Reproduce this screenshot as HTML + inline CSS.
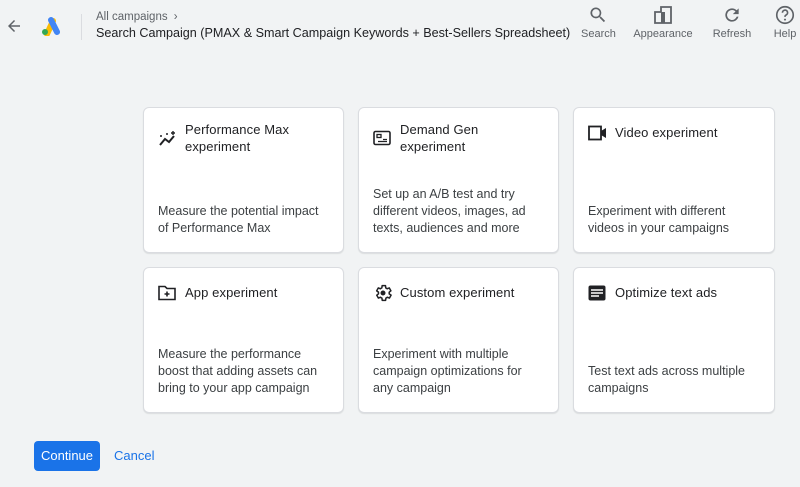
<!DOCTYPE html>
<html><head><meta charset="utf-8"><style>
*{margin:0;padding:0;box-sizing:border-box}
body{width:800px;height:487px;background:#f1f3f4;font-family:"Liberation Sans",Arial,sans-serif;position:relative;overflow:hidden;color:#202124}
.a{position:absolute}
.card{position:absolute;background:#fff;border:1px solid #dadce0;border-radius:6px;box-shadow:0 1px 1px rgba(60,64,67,.12)}
.t{position:absolute;left:41px;top:13px;font-size:13px;line-height:17px;color:#202124;letter-spacing:.1px}
.ic{position:absolute;left:14px;top:20px}
.d{position:absolute;left:14px;bottom:15px;font-size:12.5px;line-height:17px;color:#3c4043;width:168px}
.tb{position:absolute;top:28px;font-size:11px;color:#5f6368;text-align:center}
</style></head><body>
<svg class="a" style="left:5px;top:17px" width="18" height="18" viewBox="0 0 24 24"><path d="M20 11H7.8l5.6-5.6L12 4l-8 8 8 8 1.4-1.4L7.8 13H20z" fill="#5f6368"/></svg>
<svg class="a" style="left:40px;top:16px" width="22" height="20" viewBox="0 0 22 20"><path d="M7 18 L13 5" stroke="#fbbc04" stroke-width="6" stroke-linecap="round"/><path d="M11 4 L17 16" stroke="#4285f4" stroke-width="6" stroke-linecap="round"/><circle cx="5" cy="16" r="3" fill="#34a853"/></svg>
<div class="a" style="left:81px;top:14px;width:1px;height:26px;background:#dadce0"></div>
<div class="a" style="left:96px;top:11px;font-size:11.5px;color:#5f6368">All campaigns <span style="margin-left:3px">›</span></div>
<div class="a" style="left:96px;top:26px;font-size:12.6px;color:#202124;white-space:nowrap">Search Campaign (PMAX &amp; Smart Campaign Keywords + Best-Sellers Spreadsheet)</div>
<svg class="a" style="left:588px;top:5px" width="20" height="20" viewBox="0 0 24 24"><path d="M15.5 14h-.8l-.3-.3A6.5 6.5 0 1 0 9.5 16a6.5 6.5 0 0 0 4.2-1.6l.3.3v.8l5 5 1.5-1.5-5-5zm-6 0A4.5 4.5 0 1 1 14 9.5 4.5 4.5 0 0 1 9.5 14z" fill="#5f6368"/></svg>
<div class="tb" style="left:581px;width:34px">Search</div>
<svg class="a" style="left:653px;top:5px" width="20" height="20" viewBox="0 0 20 20"><path d="M8 2h10v16H2V7h6z" fill="none" stroke="#5f6368" stroke-width="1.8"/><rect x="8" y="7" width="4" height="11" fill="#5f6368"/></svg>
<div class="tb" style="left:633px;width:60px">Appearance</div>
<svg class="a" style="left:722px;top:5px" width="20" height="20" viewBox="0 0 24 24"><path d="M17.65 6.35A7.95 7.95 0 0 0 12 4a8 8 0 1 0 7.73 10h-2.08A6 6 0 1 1 12 6c1.66 0 3.14.69 4.22 1.78L13 11h7V4z" fill="#5f6368"/></svg>
<div class="tb" style="left:711px;width:42px">Refresh</div>
<svg class="a" style="left:774px;top:4px" width="22" height="22" viewBox="0 0 24 24"><circle cx="12" cy="12" r="9" fill="none" stroke="#5f6368" stroke-width="1.8"/><path d="M9.2 9.5a2.8 2.8 0 1 1 4 2.5c-.8.4-1.2 1-1.2 2" fill="none" stroke="#5f6368" stroke-width="1.8"/><circle cx="12" cy="17" r="1.1" fill="#5f6368"/></svg>
<div class="tb" style="left:772px;width:26px">Help</div>

<div class="card" style="left:143px;top:107px;width:201px;height:146px">
<svg class="ic" style="top:22px" width="20" height="18" viewBox="0 0 20 18"><path d="M2 15l5-6 4 3 5-6" fill="none" stroke="#202124" stroke-width="2"/><path d="M15 1v4M13 3h4" stroke="#202124" stroke-width="1.4"/><circle cx="3" cy="6" r="1" fill="#202124"/><circle cx="9" cy="4" r="1" fill="#202124"/></svg>
<div class="t">Performance Max<br>experiment</div>
<div class="d">Measure the potential impact of Performance Max</div></div>
<div class="card" style="left:358px;top:107px;width:201px;height:146px">
<svg class="ic" style="top:22px" width="18" height="16" viewBox="0 0 18 16"><rect x="1" y="1.5" width="16" height="13" rx="1.5" fill="none" stroke="#202124" stroke-width="1.6"/><rect x="4" y="4.5" width="4" height="3" fill="none" stroke="#202124" stroke-width="1.3"/><path d="M5 11.5h9M10 9.5h4" stroke="#202124" stroke-width="1.3"/></svg>
<div class="t">Demand Gen<br>experiment</div>
<div class="d">Set up an A/B test and try different videos, images, ad texts, audiences and more</div></div>
<div class="card" style="left:573px;top:107px;width:202px;height:146px">
<svg class="ic" style="top:17px" width="20" height="16" viewBox="0 0 20 16"><rect x="1" y="1.5" width="12" height="13" fill="none" stroke="#202124" stroke-width="1.8"/><path d="M13 6l5-3v10l-5-3z" fill="#202124"/></svg>
<div class="t" style="top:16px">Video experiment</div>
<div class="d">Experiment with different videos in your campaigns</div></div>

<div class="card" style="left:143px;top:267px;width:201px;height:146px">
<svg class="ic" style="top:17px" width="18" height="16" viewBox="0 0 18 16"><path d="M1 1.5h6l2 2h8v11H1z" fill="none" stroke="#202124" stroke-width="1.6"/><path d="M9 6.5v5M6.5 9h5" stroke="#202124" stroke-width="1.6"/></svg>
<div class="t" style="top:16px">App experiment</div>
<div class="d">Measure the performance boost that adding assets can bring to your app campaign</div></div>
<div class="card" style="left:358px;top:267px;width:201px;height:146px">
<svg class="ic" style="top:15px" width="20" height="20" viewBox="0 0 24 24"><path d="M19.4 13a7.5 7.5 0 0 0 0-2l2.1-1.6-2-3.5-2.5 1a7 7 0 0 0-1.7-1L15 3.2h-4l-.4 2.7a7 7 0 0 0-1.7 1l-2.5-1-2 3.5L6.6 11a7.5 7.5 0 0 0 0 2l-2.1 1.6 2 3.5 2.5-1a7 7 0 0 0 1.7 1l.4 2.7h4l.4-2.7a7 7 0 0 0 1.7-1l2.5 1 2-3.5z" fill="none" stroke="#202124" stroke-width="1.8" stroke-linejoin="round"/><circle cx="12" cy="12" r="3" fill="#202124"/></svg>
<div class="t" style="top:16px">Custom experiment</div>
<div class="d">Experiment with multiple campaign optimizations for any campaign</div></div>
<div class="card" style="left:573px;top:267px;width:202px;height:146px">
<svg class="ic" style="top:17px" width="18" height="16" viewBox="0 0 18 16"><rect x="0.5" y="0.5" width="17" height="15" rx="2" fill="#202124"/><path d="M3 5h12M3 8h12M3 11h8" stroke="#fff" stroke-width="1.5"/></svg>
<div class="t" style="top:16px">Optimize text ads</div>
<div class="d">Test text ads across multiple campaigns</div></div>

<div class="a" style="left:34px;top:441px;width:66px;height:30px;background:#1a73e8;border-radius:4px;color:#fff;font-size:13px;line-height:30px;text-align:center">Continue</div>
<div class="a" style="left:114px;top:441px;font-size:13px;line-height:30px;color:#1a73e8">Cancel</div>
</body></html>
